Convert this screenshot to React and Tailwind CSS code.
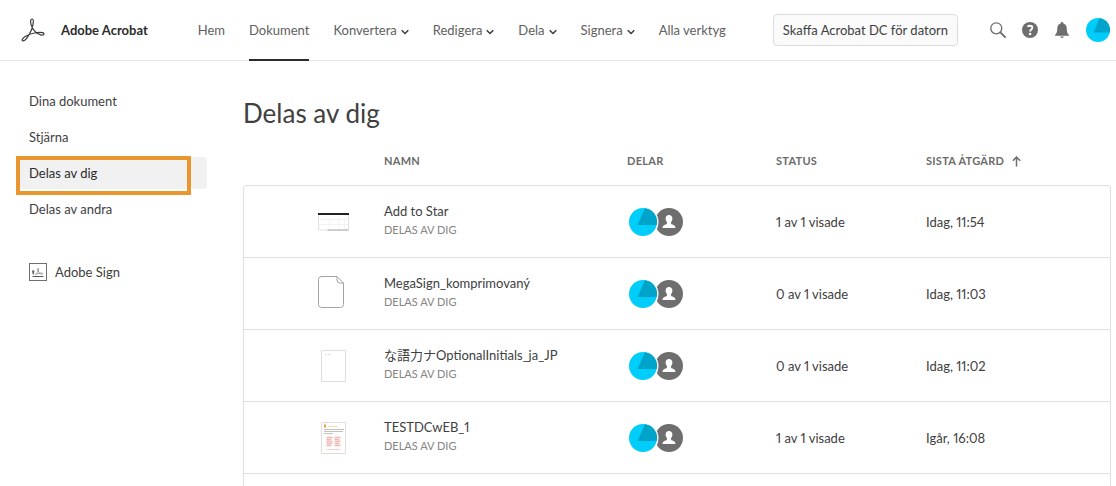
import React from "react";

const navItems = [
  { label: "Hem" },
  { label: "Dokument", active: true },
  { label: "Konvertera", menu: true },
  { label: "Redigera", menu: true },
  { label: "Dela", menu: true },
  { label: "Signera", menu: true },
  { label: "Alla verktyg" },
];

const sideItems = ["Dina dokument", "Stjärna", "Delas av dig", "Delas av andra"];

const files = [
  { name: "Add to Star", thumb: "sheet", status: "1 av 1 visade", last: "Idag, 11:54" },
  { name: "MegaSign_komprimovaný", thumb: "file", status: "0 av 1 visade", last: "Idag, 11:03" },
  { name: "な語力ナOptionalInitials_ja_JP", thumb: "blank", status: "0 av 1 visade", last: "Idag, 11:02" },
  { name: "TESTDCwEB_1", thumb: "report", status: "1 av 1 visade", last: "Igår, 16:08" },
];

function AcrobatLogo() {
  return (
    <svg className="h-6 w-6 shrink-0" viewBox="0 0 24 24" fill="none" stroke="#3a3a3a" strokeLinecap="round" strokeLinejoin="round" aria-hidden="true">
      <path strokeWidth="1.2" d="M11.400 1C9.200.8 9.300 4 10.300 7.300C11.500 11 15.600 16.600 20.300 17.100C23.200 17.400 23.900 15.200 21.600 14.600C17.600 13.700 9.300 15.400 4.700 18.300C1.300 20.400.5 22.200 1.700 22.800C4.200 23.600 8.600 16.600 10.700 11.200C12.200 7.200 13.100 1.200 11.400 1Z" />
    </svg>
  );
}

function Chevron() {
  return (
    <svg className="mt-1 h-2 w-2" viewBox="0 0 8 8" fill="none" stroke="#3c3c3c" strokeWidth="1.5" aria-hidden="true">
      <path d="M.7 2.2 4 5.5 7.3 2.2" />
    </svg>
  );
}

function Avatar({ className }) {
  return (
    <svg className={className} viewBox="0 0 28 28" aria-hidden="true">
      <circle cx="14" cy="14" r="14" fill="#00cdfa" />
      <path d="M8.5 17 16 .15A14 14 0 0 1 27.7 17Z" fill="#00a3c9" />
    </svg>
  );
}

function Person() {
  return (
    <svg className="-ml-1.5 h-8 w-8" viewBox="0 0 32 32" aria-hidden="true">
      <circle cx="18" cy="16" r="14" fill="#6e6e6e" />
      <path fill="#fff" d="M18 9c2.1 0 3.4 1.4 3.4 3.6 0 1.5-.5 2.7-1.3 3.5v1.3c0 .6.5.8 1.2 1 2 .5 3.2 1.300 3.200 3.600H11.500c0-2.300 1.200-3.100 3.200-3.600.7-.2 1.200-.4 1.200-1v-1.300c-.8-.8-1.300-2-1.300-3.500C14.600 10.400 15.900 9 18 9Z" />
      <circle cx="-8" cy="16" r="15.500" fill="#fff" />
    </svg>
  );
}

function Thumb({ kind }) {
  if (kind === "sheet") {
    return (
      <svg className="h-8 w-8" viewBox="0 0 32 32" aria-hidden="true">
        <path d="M.5 8v16h30V8" fill="#fff" stroke="#e2e2e2" />
        <path d="M0 8h31" stroke="#222" strokeWidth="2" />
        <path d="M9.500 24h21" stroke="#aaa" />
        <path d="M11.500 12v10M20.500 12v10M26.500 12v10M1 13.500h29M1 18.500h29" stroke="#f3f3f3" />
      </svg>
    );
  }
  if (kind === "file") {
    return (
      <svg className="mb-1 h-8 w-8" viewBox="0 0 32 32" fill="none" stroke="#a2a2a2" aria-hidden="true">
        <path d="M3 .5H19l6.500 6.500v21.500a3 3 0 0 1-3 3h-19a3 3 0 0 1-3-3v-25a3 3 0 0 1 3-3Z" />
        <path d="M19 .5V4a3 3 0 0 0 3 3h3.500" />
      </svg>
    );
  }
  return (
    <svg className="h-8 w-8" viewBox="0 0 32 32" fill="none" aria-hidden="true">
      <path d="M3.500.5h24v31h-24Z" fill="#fff" stroke="#dedede" />
      {kind === "blank" && <path d="M7 4.500h2m1 0h3" stroke="#e0e0e0" />}
      {kind === "report" && (
        <>
          <path d="M6 4h2" stroke="#f09b35" strokeWidth="3" />
          <path d="M9.500 4.500H20" stroke="#f7d9b0" />
          <path d="M6 7.500h20M6 9.500h19M6 11.500h9" stroke="#c2bfbd" />
          <path d="M8.500 15.500h6M8.500 17.500h5M8.500 19.500h6M8.500 21.500h6M8.500 23.500h5M16.500 15.500h6M16.500 17.500h5M16.500 19.500h6M16.500 21.500h5M16.500 23.500h6" stroke="#efb9b6" strokeWidth="1.300" />
          <path d="M9 27.500h13" stroke="#f3cfcd" />
        </>
      )}
    </svg>
  );
}

function SignIcon() {
  return (
    <svg className="h-[18px] w-[18px]" viewBox="0 0 18 18" fill="none" aria-hidden="true">
      <rect x=".5" y=".5" width="17" height="17" stroke="#707070" />
      <path d="M3.500 13.500h11" stroke="#5a5a5a" />
      <path d="M3 7.500h2.500L4.700 11.500h-.9Z" fill="#5a5a5a" />
      <path d="M6 11.500c2-.5 3.500-3.500 3.500-5.500 0-1.200-1.300-.8-1 .5.400 2 2.200 4.500 4.500 4.700 1 0 .8-1.200-.3-1.200-2 0-4 .6-5.200 1.500" stroke="#8a8a8a" strokeWidth=".8" />
    </svg>
  );
}

const th = "p-0 pb-4 text-left text-[11px] leading-4 font-bold tracking-wide text-[#6b6b6b] uppercase";

export default function App() {
  return (
    <div className="flex h-screen flex-col overflow-hidden bg-white font-['Lato','Noto_Sans_CJK_JP',sans-serif] text-[13px] leading-5 text-[#404040] proportional-nums">
      <header className="flex h-[61px] shrink-0 items-center border-b border-[#e4e4e4] pr-[6px] pl-[21px]">
        <a href="#hem" className="flex items-center gap-4 font-bold whitespace-nowrap text-[#2c2c2c]">
          <AcrobatLogo />
          Adobe Acrobat
        </a>
        <nav className="ml-[50px] flex gap-6 self-stretch text-[#606060]" aria-label="Huvudmeny">
          {navItems.map((n) =>
            n.menu ? (
              <button key={n.label} type="button" className="flex items-center gap-1 whitespace-nowrap" aria-haspopup="menu">
                {n.label}
                <Chevron />
              </button>
            ) : (
              <a
                key={n.label}
                href={"#" + n.label}
                aria-current={n.active ? "page" : undefined}
                className={n.active ? "-mb-px flex items-center border-b-2 border-[#2c2c2c] whitespace-nowrap" : "flex items-center whitespace-nowrap"}
              >
                {n.label}
              </a>
            )
          )}
        </nav>
        <button type="button" className="ml-auto h-8 rounded border border-[#dcdcdc] bg-[#fafafa] px-[9px] whitespace-nowrap">
          Skaffa Acrobat DC för datorn
        </button>
        <div className="ml-8 flex items-center gap-4">
          <button type="button" aria-label="Sök">
            <svg className="h-4 w-4" viewBox="0 0 16 16" fill="none" stroke="#6e6e6e" strokeWidth="1.300" strokeLinecap="round">
              <circle cx="6.300" cy="6.300" r="5.500" />
              <path d="m10.300 10.300 4.700 4.700" strokeWidth="1.800" />
            </svg>
          </button>
          <button type="button" aria-label="Hjälp">
            <svg className="h-4 w-4" viewBox="0 0 16 16">
              <circle cx="8" cy="8" r="8" fill="#6e6e6e" />
              <path d="M5.500 4.600C6.200 3.900 7.100 3.700 8 3.700c1.400 0 2.400.7 2.400 1.900 0 1.800-2.300 1.900-2.300 3.900" fill="none" stroke="#fff" strokeWidth="1.900" />
              <circle cx="8.100" cy="12" r="1.300" fill="#fff" />
            </svg>
          </button>
          <button type="button" aria-label="Aviseringar">
            <svg className="h-4 w-4" viewBox="0 0 16 16" fill="#6e6e6e">
              <path d="M8 0c.8 0 1.400.6 1.400 1.400C11.600 2 12.700 3.700 12.700 6c0 4 .8 5.700 2.300 7v.8H1V13c1.500-1.300 2.300-3 2.300-7 0-2.300 1.100-4 3.300-4.600C6.600.6 7.200 0 8 0Z" />
              <path d="M6.200 14.600h3.600c-.2.900-.8 1.400-1.800 1.400s-1.600-.5-1.800-1.400Z" />
            </svg>
          </button>
          <button type="button" aria-label="Profil">
            <Avatar className="h-6 w-6" />
          </button>
        </div>
      </header>

      <div className="flex min-h-0 flex-1">
        <aside className="w-[207px] shrink-0 pt-6 pl-4">
          <ul className="flex flex-col gap-1">
            {sideItems.map((s) => {
              const active = s === "Delas av dig";
              return (
                <li key={s} className="relative">
                  <a
                    href={"#" + s}
                    className={active ? "flex h-8 items-center rounded bg-[#f1f1f1] px-[13px] text-[#2c2c2c]" : "flex h-8 items-center px-[13px]"}
                  >
                    {s}
                  </a>
                  {active && <span className="pointer-events-none absolute -top-px left-0 h-[39px] w-[175px] border-4 border-[#ea962f]" />}
                </li>
              );
            })}
          </ul>
          <a href="#sign" className="mt-[31px] flex h-8 items-center gap-2 px-[13px]">
            <SignIcon />
            Adobe Sign
          </a>
        </aside>

        <main className="min-w-0 flex-1 overflow-hidden pt-9 pr-[5px] pl-9">
          <h1 className="text-[26px] leading-8">Delas av dig</h1>
          <table className="mt-6 w-full table-fixed border-separate border-spacing-0">
            <colgroup>
              <col className="w-[141px]" />
              <col className="w-[243px]" />
              <col className="w-[149px]" />
              <col className="w-[150px]" />
              <col />
            </colgroup>
            <thead>
              <tr>
                <td className="p-0" />
                <th scope="col" className={th}>Namn</th>
                <th scope="col" className={th}>Delar</th>
                <th scope="col" className={th}>Status</th>
                <th scope="col" className={th} aria-sort="ascending">
                  <button type="button" className="flex items-center gap-2 tracking-wide uppercase">
                    Sista åtgärd
                    <svg className="h-[11px] w-[9px]" viewBox="0 0 9 11" fill="none" stroke="#6e6e6e" strokeWidth="1.500" aria-hidden="true">
                      <path d="M4.500 10.500V1.200M.8 4.800 4.500 1.100l3.700 3.700" />
                    </svg>
                  </button>
                </th>
              </tr>
            </thead>
            <tbody className="[&_td]:border-t [&_td]:border-[#dfdfdf] [&_td]:p-0 [&_td:first-child]:border-l [&_td:last-child]:border-r [&_tr:first-child_td:first-child]:rounded-tl [&_tr:first-child_td:last-child]:rounded-tr">
              {files.map((f) => (
                <tr key={f.name} className="h-[72px]">
                  <td>
                    <div className="flex pl-[74px]">
                      <Thumb kind={f.thumb} />
                    </div>
                  </td>
                  <td>
                    <div className="pb-1">
                      <div className="leading-5 whitespace-nowrap">{f.name}</div>
                      <div className="text-[11px] leading-[18px] text-[#858585]">DELAS AV DIG</div>
                    </div>
                  </td>
                  <td>
                    <div className="flex items-center pl-[2px]">
                      <Avatar className="z-10 h-7 w-7" />
                      <Person />
                    </div>
                  </td>
                  <td>{f.status}</td>
                  <td>{f.last}</td>
                </tr>
              ))}
              <tr className="h-[72px]">
                <td />
                <td />
                <td />
                <td />
                <td />
              </tr>
            </tbody>
          </table>
        </main>
      </div>
    </div>
  );
}
